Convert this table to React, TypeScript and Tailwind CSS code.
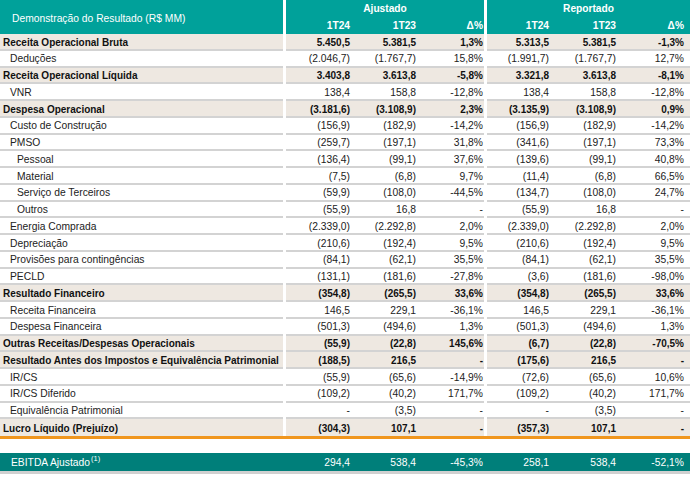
import React from "react";

type Row = { label: string; kind: "band" | 1 | 2; v: string[] };

const rows: Row[] = [
  { label: "Receita Operacional Bruta", kind: "band", v: ["5.450,5", "5.381,5", "1,3%", "5.313,5", "5.381,5", "-1,3%"] },
  { label: "Deduções", kind: 1, v: ["(2.046,7)", "(1.767,7)", "15,8%", "(1.991,7)", "(1.767,7)", "12,7%"] },
  { label: "Receita Operacional Líquida", kind: "band", v: ["3.403,8", "3.613,8", "-5,8%", "3.321,8", "3.613,8", "-8,1%"] },
  { label: "VNR", kind: 1, v: ["138,4", "158,8", "-12,8%", "138,4", "158,8", "-12,8%"] },
  { label: "Despesa Operacional", kind: "band", v: ["(3.181,6)", "(3.108,9)", "2,3%", "(3.135,9)", "(3.108,9)", "0,9%"] },
  { label: "Custo de Construção", kind: 1, v: ["(156,9)", "(182,9)", "-14,2%", "(156,9)", "(182,9)", "-14,2%"] },
  { label: "PMSO", kind: 1, v: ["(259,7)", "(197,1)", "31,8%", "(341,6)", "(197,1)", "73,3%"] },
  { label: "Pessoal", kind: 2, v: ["(136,4)", "(99,1)", "37,6%", "(139,6)", "(99,1)", "40,8%"] },
  { label: "Material", kind: 2, v: ["(7,5)", "(6,8)", "9,7%", "(11,4)", "(6,8)", "66,5%"] },
  { label: "Serviço de Terceiros", kind: 2, v: ["(59,9)", "(108,0)", "-44,5%", "(134,7)", "(108,0)", "24,7%"] },
  { label: "Outros", kind: 2, v: ["(55,9)", "16,8", "-", "(55,9)", "16,8", "-"] },
  { label: "Energia Comprada", kind: 1, v: ["(2.339,0)", "(2.292,8)", "2,0%", "(2.339,0)", "(2.292,8)", "2,0%"] },
  { label: "Depreciação", kind: 1, v: ["(210,6)", "(192,4)", "9,5%", "(210,6)", "(192,4)", "9,5%"] },
  { label: "Provisões para contingências", kind: 1, v: ["(84,1)", "(62,1)", "35,5%", "(84,1)", "(62,1)", "35,5%"] },
  { label: "PECLD", kind: 1, v: ["(131,1)", "(181,6)", "-27,8%", "(3,6)", "(181,6)", "-98,0%"] },
  { label: "Resultado Financeiro", kind: "band", v: ["(354,8)", "(265,5)", "33,6%", "(354,8)", "(265,5)", "33,6%"] },
  { label: "Receita Financeira", kind: 1, v: ["146,5", "229,1", "-36,1%", "146,5", "229,1", "-36,1%"] },
  { label: "Despesa Financeira", kind: 1, v: ["(501,3)", "(494,6)", "1,3%", "(501,3)", "(494,6)", "1,3%"] },
  { label: "Outras Receitas/Despesas Operacionais", kind: "band", v: ["(55,9)", "(22,8)", "145,6%", "(6,7)", "(22,8)", "-70,5%"] },
  { label: "Resultado Antes dos Impostos e Equivalência Patrimonial", kind: "band", v: ["(188,5)", "216,5", "-", "(175,6)", "216,5", "-"] },
  { label: "IR/CS", kind: 1, v: ["(55,9)", "(65,6)", "-14,9%", "(72,6)", "(65,6)", "10,6%"] },
  { label: "IR/CS Diferido", kind: 1, v: ["(109,2)", "(40,2)", "171,7%", "(109,2)", "(40,2)", "171,7%"] },
  { label: "Equivalência Patrimonial", kind: 1, v: ["-", "(3,5)", "-", "-", "(3,5)", "-"] },
  { label: "Lucro Líquido (Prejuízo)", kind: "band", v: ["(304,3)", "107,1", "-", "(357,3)", "107,1", "-"] },
];

function DataRow({ r, last }: { r: Row; last: boolean }) {
  const band = r.kind === "band";
  const seg = `${band ? "bg-[#eee8e1] font-bold text-[#111] text-[10px]" : "bg-white text-[#222] text-[10.3px]"} ${last ? "" : "border-b-2 border-[#d3d3d3]"} h-[16.75px] pt-[3px] flex items-center whitespace-nowrap`;
  const pad = r.kind === "band" ? "pl-[3px]" : r.kind === 1 ? "pl-[10px]" : "pl-[17px]";
  return (
    <div className="flex gap-[3px]">
      <div className={`${seg} w-[283px] shrink-0 ${pad}`}>{r.label}</div>
      <div className={`${seg} w-[198px] shrink-0`}>
        <div className="w-[66px] text-right pr-[2px]">{r.v[0]}</div>
        <div className="w-[66px] text-right pr-[2px]">{r.v[1]}</div>
        <div className="w-[66px] text-right pr-[1px]">{r.v[2]}</div>
      </div>
      <div className={`${seg} flex-1`}>
        <div className="w-[67px] text-right pr-[5px]">{r.v[3]}</div>
        <div className="w-[67px] text-right pr-[5px]">{r.v[4]}</div>
        <div className="flex-1 text-right pr-[6px]">{r.v[5]}</div>
      </div>
    </div>
  );
}

export default function App() {
  return (
    <div
      className="w-[690px] h-[477px] bg-white overflow-hidden text-[10.2px] leading-none"
      style={{ fontFamily: '"Liberation Sans", Arial, sans-serif' }}
    >
      {/* header */}
      <div className="flex gap-[3px] h-[34px] text-white">
        <div className="w-[283px] shrink-0 bg-[#00a19a] flex items-center pl-[12px] pt-[4px] text-[10.3px]">
          Demonstração do Resultado (R$ MM)
        </div>
        <div className="w-[198px] shrink-0 bg-[#00a19a] flex flex-col font-bold">
          <div className="h-[17px] flex items-center justify-center pt-[2px]">Ajustado</div>
          <div className="h-[17px] flex items-center pt-[2px]">
            <div className="w-[66px] text-right pr-[2px]">1T24</div>
            <div className="w-[66px] text-right pr-[2px]">1T23</div>
            <div className="w-[66px] text-right pr-[1px]">Δ%</div>
          </div>
        </div>
        <div className="flex-1 bg-[#00a19a] flex flex-col font-bold">
          <div className="h-[17px] flex items-center justify-center pt-[2px]">Reportado</div>
          <div className="h-[17px] flex items-center pt-[2px]">
            <div className="w-[67px] text-right pr-[5px]">1T24</div>
            <div className="w-[67px] text-right pr-[5px]">1T23</div>
            <div className="flex-1 text-right pr-[6px]">Δ%</div>
          </div>
        </div>
      </div>

      {rows.map((r, i) => (
        <DataRow key={i} r={r} last={i === rows.length - 1} />
      ))}

      <div className="h-[3px] bg-[#f0961e]" />

      <div className="h-[14px]" />

      <div className="h-[18px] bg-[#007f7a] text-white flex items-center pt-[2px] text-[10.3px]">
        <div className="w-[286px] shrink-0 pl-[11px] flex items-start">
          <span>EBITDA Ajustado</span>
          <span className="text-[7.5px] leading-none -mt-[3px] ml-[1px]">(1)</span>
        </div>
        <div className="w-[66px] text-right pr-[2px]">294,4</div>
        <div className="w-[66px] text-right pr-[2px]">538,4</div>
        <div className="w-[66px] text-right pr-[1px]">-45,3%</div>
        <div className="w-[3px]" />
        <div className="w-[67px] text-right pr-[5px]">258,1</div>
        <div className="w-[67px] text-right pr-[5px]">538,4</div>
        <div className="flex-1 text-right pr-[6px]">-52,1%</div>
      </div>
      <div className="h-[3px] bg-[#d0d0d0]" />
    </div>
  );
}
